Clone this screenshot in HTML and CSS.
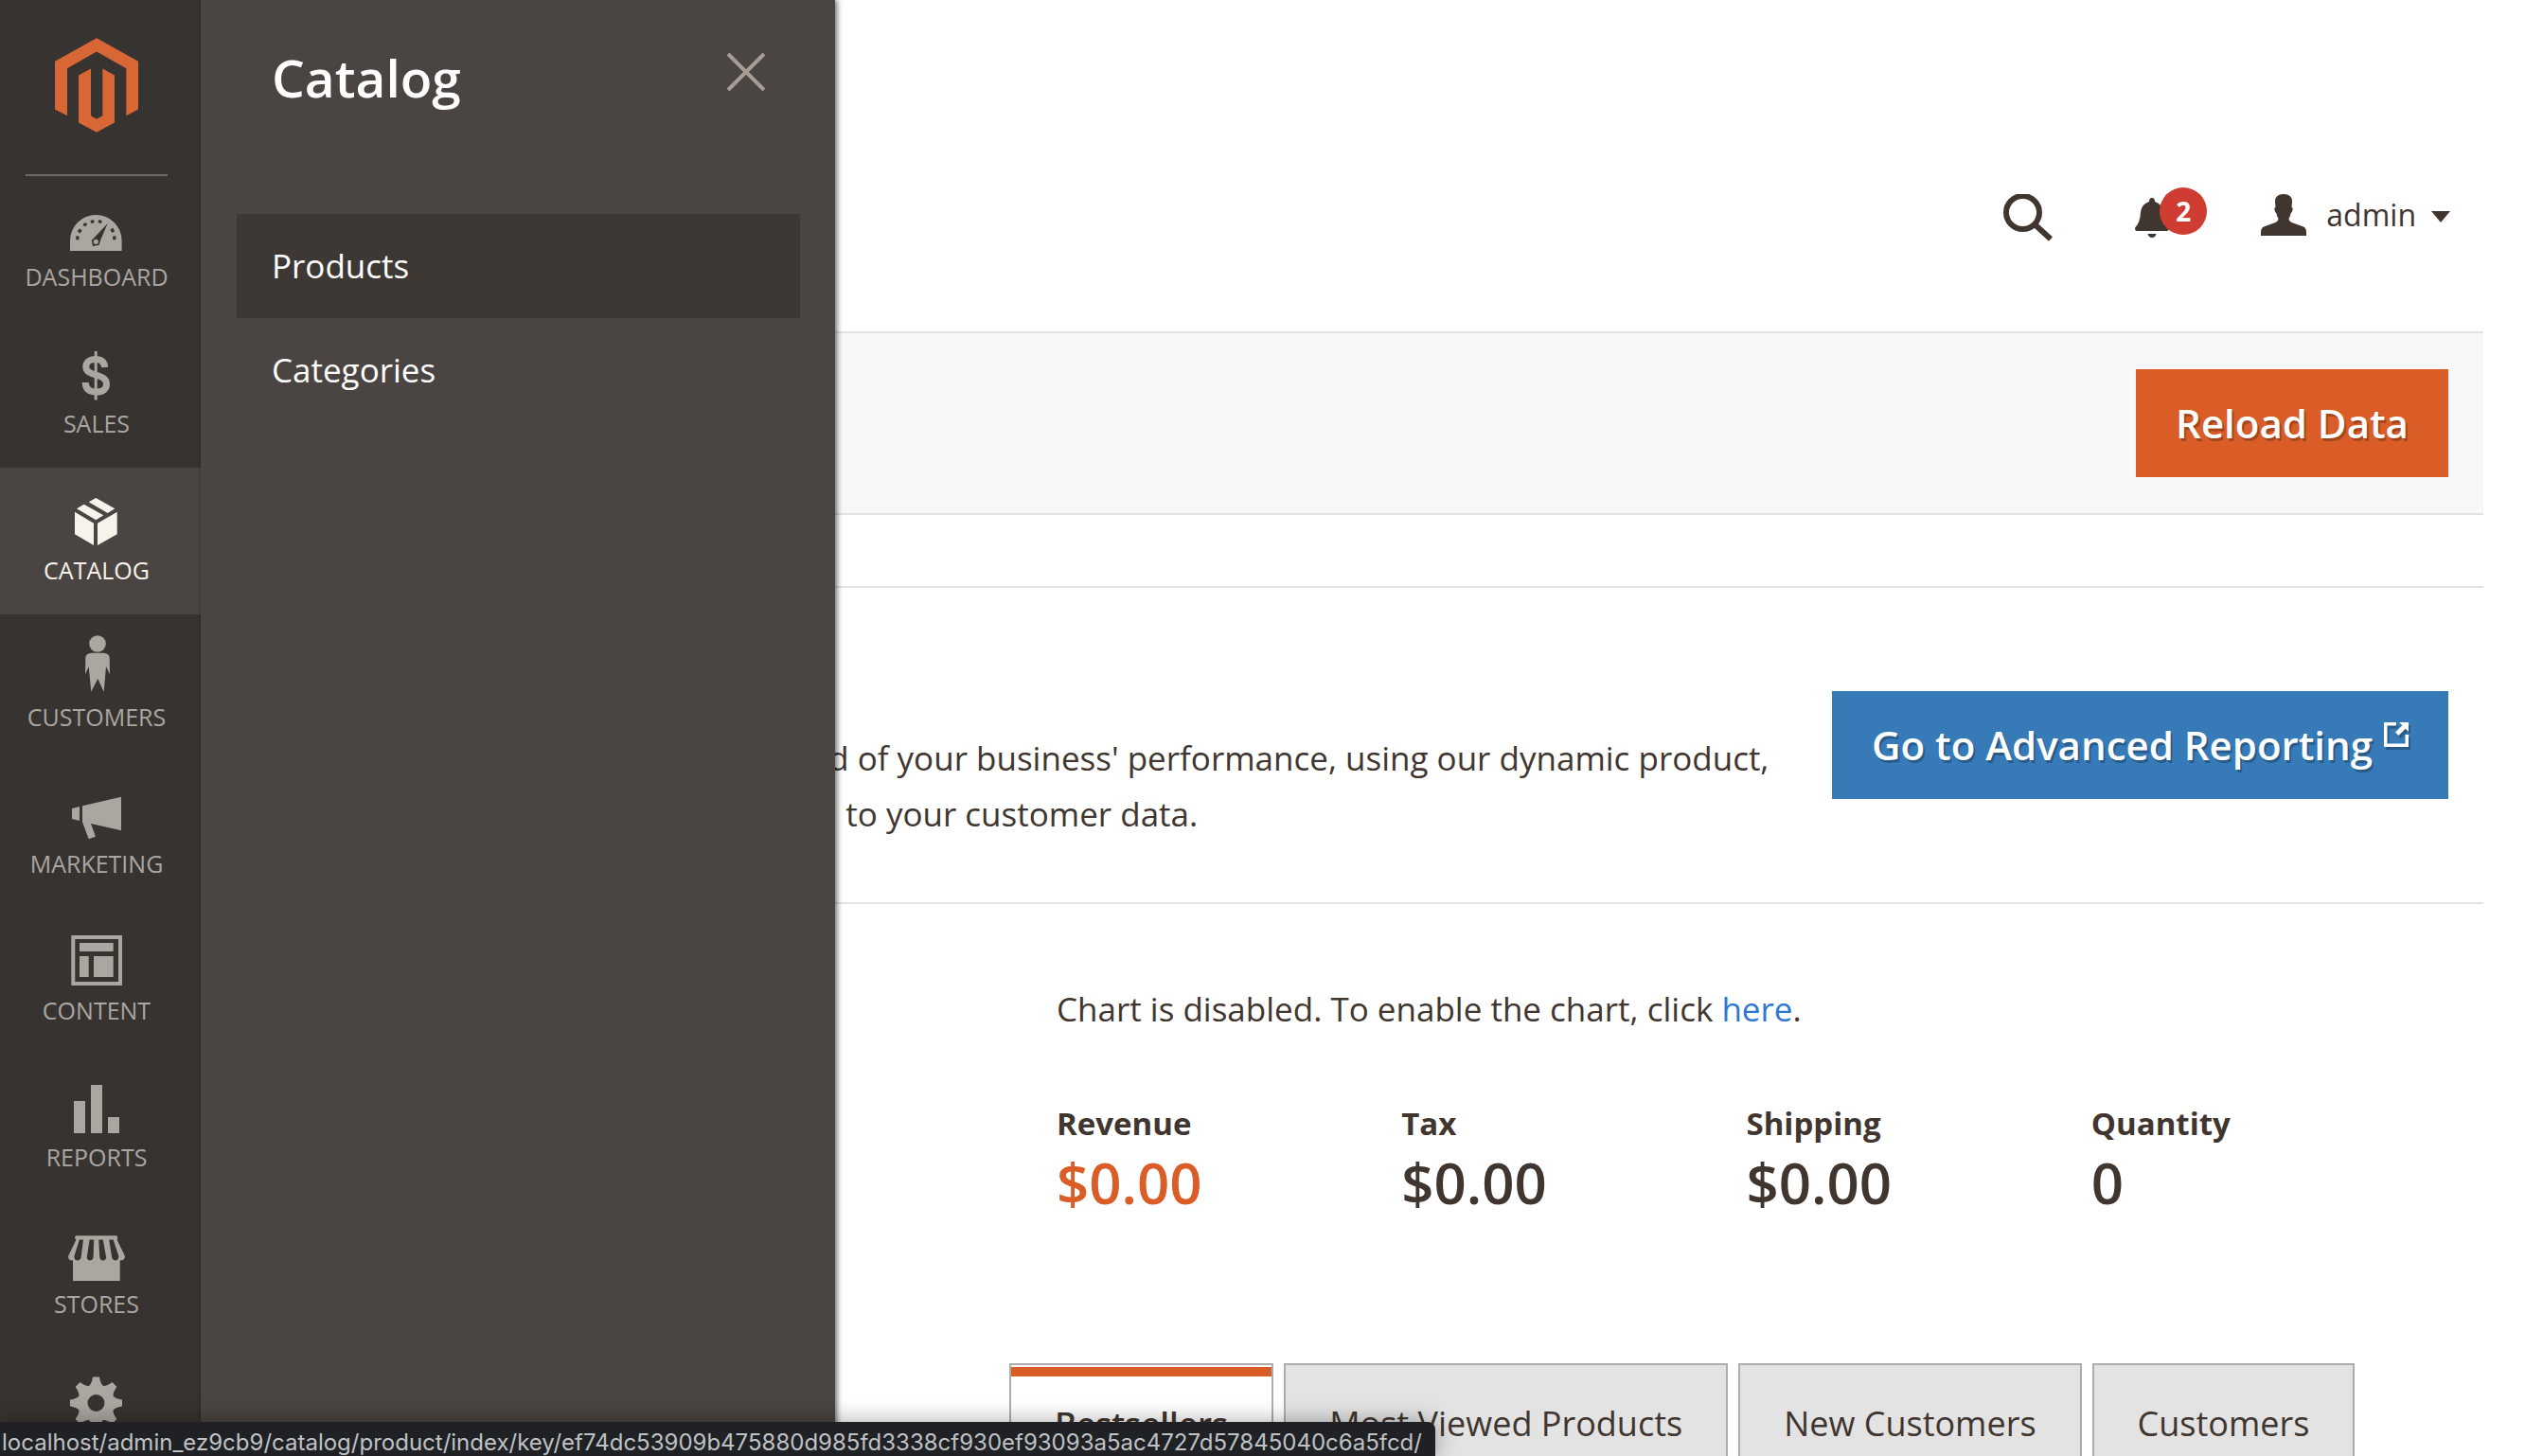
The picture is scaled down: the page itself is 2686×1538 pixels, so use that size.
FILE: index.html
```html
<!DOCTYPE html>
<html lang="en">
<head>
<meta charset="utf-8">
<meta name="viewport" content="width=device-width, initial-scale=1">
<title>Dashboard / Magento Admin</title>
<link rel="stylesheet" href="styles.css">
</head>
<body>
<div class="app">
  <aside class="sidebar">
    <a class="logo" href="#" aria-label="Magento Admin Panel">
      <svg viewBox="174 120 264 299" width="88" height="100" aria-hidden="true">
        <path d="M306 120 438 194V346L400 366V216L306 163 213 216V366L174 346V194Z"/>
        <path d="M249 238 288 217V366L306 377 325 366V217L363 238V388L306 419 249 388Z"/>
      </svg>
    </a>
    <nav class="menu" aria-label="Main">
      <a class="menu-item" href="#">
        <svg class="menu-icon" viewBox="0 0 60 64" aria-hidden="true">
          <path fill-rule="evenodd" d="M2 59V48A27.3 27 0 0 1 56.6 48V59ZM41.7 30 24.7 48 26 54 32.7 52.7 34.3 47.3Z"/>
          <circle cx="29.3" cy="49.3" r="2.6"/>
          <g class="cut">
            <path d="M8.4 43.2l3.2.4-.3 3.8-3.2-.3zM11.6 35.4l3 1.8-1.8 3.2-3-1.8zM17 29.2l3.3 1-1.6 3-3.2-1zM23.6 26.8l3.6-.6.4 3-3.6.8zM32 26.2l3.6.6-.4 3.2-3.6-.8zM44.4 36.6l2.8-1.8 2 3.4-2.8 1.8zM47 43.6l3.2-.4.4 3.8-3.2.4z"/>
          </g>
        </svg>
        <span>DASHBOARD</span>
      </a>
      <a class="menu-item" href="#">
        <svg class="menu-icon" viewBox="0 0 60 64" aria-hidden="true">
          <path class="line" stroke-width="7" d="M38.7 27C38.2 21 34.6 18.5 28.8 18.5C22.5 18.5 18.8 21.7 18.8 26.2C18.8 31.5 23 33.2 29 35C36 37 40.5 39 40.5 45C40.5 50.4 36 53 29.5 53C22 53 18.3 49.5 18.2 43"/>
          <path class="line" stroke-width="3" d="M29.2 10V61.5"/>
        </svg>
        <span>SALES</span>
      </a>
      <a class="menu-item active" href="#" aria-current="page">
        <svg class="menu-icon" viewBox="0 0 60 64" aria-hidden="true">
          <path d="M7 24.7 27 36.7V60L7 48.3ZM51.7 24.7 31 36.7V60L51.7 48.3ZM29.3 10 49.3 21.3 41.7 26 21.7 14.3ZM16.7 16.7 37.3 28.3 29.3 33.3 9 21.3Z"/>
        </svg>
        <span>CATALOG</span>
      </a>
      <a class="menu-item" href="#">
        <svg class="menu-icon" viewBox="0 0 60 64" aria-hidden="true">
          <circle cx="31" cy="9" r="8.8"/>
          <path d="M25 18.7H37Q43.5 19 43.7 24L44 41.3 40 33 37.7 59.7 31.3 46 24.3 59.7 21.7 33 18 41.3 18.3 24Q18.5 19 25 18.7Z"/>
        </svg>
        <span>CUSTOMERS</span>
      </a>
      <a class="menu-item" href="#">
        <svg class="menu-icon" viewBox="0 0 60 64" aria-hidden="true">
          <path d="M4 28 12 26V41L4 39ZM15 25.3 56 15.7V51.3L24 44 29 57.7 21.7 60.3 15 42.3Z"/>
        </svg>
        <span>MARKETING</span>
      </a>
      <a class="menu-item" href="#">
        <svg class="menu-icon" viewBox="0 0 60 64" aria-hidden="true">
          <path fill-rule="evenodd" d="M3.3 7H57V60H3.3ZM7.3 11V56H53V11Z"/>
          <path d="M12 15H47.7V24H12ZM12 29H21.7V51H12ZM27 29H47.7V51H27Z"/>
        </svg>
        <span>CONTENT</span>
      </a>
      <a class="menu-item" href="#">
        <svg class="menu-icon" viewBox="0 0 60 64" aria-hidden="true">
          <path d="M6 27H18V61H6ZM24 10H36V61H24ZM42 44H54V61H42Z"/>
        </svg>
        <span>REPORTS</span>
      </a>
      <a class="menu-item" href="#">
        <svg class="menu-icon" viewBox="0 0 60 64" aria-hidden="true">
          <path d="M8.5 14.3H51Q52.5 14.5 52.3 17L51.6 18.5 60 36Q60 40.5 54.7 40.5V62H5V40.5Q0 40.5 0 36L8.5 18.5 7 17Q7 14.5 8.5 14.3Z"/>
          <path class="cut" d="M11.8 18.4H16L13.6 37.5Q12.5 40.5 9.6 40.5 6.4 40 6.4 36ZM22.6 18.4H27.2L26.6 37.5Q25.5 40.5 23 40.5 20.2 40 19.7 37.5ZM32.2 18.4H36.8L40.2 37.5Q39.5 40.5 36.7 40.5 34 40.3 33.3 37.5ZM43.2 18.4H47.6L53.4 36Q53.3 40.2 50 40.5 47 40.3 46.2 37.5Z"/>
        </svg>
        <span>STORES</span>
      </a>
      <a class="menu-item" href="#" aria-label="System">
        <svg class="menu-icon" viewBox="0 0 60 64" aria-hidden="true">
          <defs><path id="tooth" d="M22 18Q25 15.500 26 8.500H33Q34 15.500 37 18V24H22Z"/></defs>
          <use href="#tooth"/>
          <use href="#tooth" transform="rotate(45 29.500 36)"/>
          <use href="#tooth" transform="rotate(90 29.500 36)"/>
          <use href="#tooth" transform="rotate(135 29.500 36)"/>
          <use href="#tooth" transform="rotate(180 29.500 36)"/>
          <use href="#tooth" transform="rotate(225 29.500 36)"/>
          <use href="#tooth" transform="rotate(270 29.500 36)"/>
          <use href="#tooth" transform="rotate(315 29.500 36)"/>
          <circle class="line" cx="29.500" cy="36" r="14" stroke-width="10"/>
        </svg>
      </a>
    </nav>
  </aside>

  <section class="submenu" aria-label="Catalog">
    <header class="submenu-head">
      <h2>Catalog</h2>
      <button class="close" type="button" aria-label="Close">
        <svg viewBox="0 0 42 42" width="42" height="42" aria-hidden="true"><path d="M2 2 40 40M40 2 2 40"/></svg>
      </button>
    </header>
    <ul>
      <li><a class="hover" href="#">Products</a></li>
      <li><a href="#">Categories</a></li>
    </ul>
  </section>

  <div class="page">
    <header class="header">
      <button class="icon-button search" type="button" aria-label="Search">
        <svg viewBox="0 0 52 50" width="52" height="50" aria-hidden="true"><circle cx="20.500" cy="19.500" r="17.500"/><path d="M32.500 31.500 50 47.500"/></svg>
      </button>
      <button class="icon-button bell" type="button" aria-label="Notifications">
        <svg viewBox="0 0 36 42" width="36" height="42" aria-hidden="true">
          <path d="M18 0Q21 0 21 4 29 6.500 30 15 30.500 26 35.500 31 37 34.500 34 35H2Q-1 34.500 .5 31 5.500 26 6 15 7 6.500 15 4 15 0 18 0ZM13.500 38H22.500Q21.500 42 18 42 14.500 42 13.500 38Z"/>
        </svg>
        <span class="badge">2</span>
      </button>
      <button class="icon-button account" type="button">
        <svg viewBox="0 0 48 44" width="48" height="44" aria-hidden="true">
          <path d="M24 0Q33 0 33 8L32.500 14Q34 14 33.500 17 33 20 31.500 20.500 31 24 29.500 25.500 29.500 29 34 30.500L45 34.500Q48 36 48 40V44H0V40Q0 36 3 34.500L14 30.500Q18.500 29 18.500 25.500 17 24 16.500 20.500 15 20 14.500 17 14 14 15.500 14L15 8Q15 0 24 0Z"/>
        </svg>
        <span class="account-name">admin</span>
        <svg class="caret" viewBox="0 0 20 12" width="20" height="12" aria-hidden="true"><path d="M0 0H20L10 12Z"/></svg>
      </button>
    </header>

    <main class="content">
      <div class="actions">
        <button class="button primary" type="button">Reload Data</button>
      </div>

      <section class="reporting">
        <p>Gain new insights and take command of your business' performance, using our dynamic product, order, and customer reports tailored to your customer data.</p>
        <a class="button secondary" href="#">Go to Advanced Reporting
          <svg viewBox="0 0 26 26" width="26" height="26" aria-hidden="true"><path d="M13 0V3.500H3.500V22.500H22.500V13H26V26H0V0ZM16 0H26V10L22.800 6.800 15.500 14 12 10.500 19.300 3.300Z"/></svg>
        </a>
      </section>

      <section class="dashboard">
        <p class="notice">Chart is disabled. To enable the chart, click <a href="#">here</a>.</p>
        <dl class="totals">
          <div><dt>Revenue</dt><dd class="highlight">$0.00</dd></div>
          <div><dt>Tax</dt><dd>$0.00</dd></div>
          <div><dt>Shipping</dt><dd>$0.00</dd></div>
          <div><dt>Quantity</dt><dd>0</dd></div>
        </dl>
        <nav class="tabs" aria-label="Reports">
          <a class="tab selected" href="#">Bestsellers</a>
          <a class="tab" href="#">Most Viewed Products</a>
          <a class="tab" href="#">New Customers</a>
          <a class="tab" href="#">Customers</a>
        </nav>
      </section>
    </main>
  </div>

  <div class="status">localhost/admin_ez9cb9/catalog/product/index/key/ef74dc53909b475880d985fd3338cf930ef93093a5ac4727d57845040c6a5fcd/</div>
</div>
</body>
</html>
```
FILE: styles.css
```css
:root {
  --ink: #41362f;
  --side: #373330;
  --panel: #4a4542;
  --rule: #e3e3e3;
  --orange: #da5c27;
  --blue: #367ab8;
}

* { box-sizing: border-box; }

body {
  margin: 0;
  background: #fff;
  color: var(--ink);
  font: 400 35px/48px "Open Sans", "Noto Sans", sans-serif;
}

a { color: inherit; text-decoration: none; }
button { font: inherit; color: inherit; border: 0; cursor: pointer; }
svg { display: block; flex: none; }
h2, p, ul, dl, dd { margin: 0; padding: 0; }
ul { list-style: none; }

.app {
  position: relative;
  display: flex;
  height: 100vh;
  overflow: hidden;
}

/* Sidebar */
.sidebar {
  flex: none;
  width: 212px;
  background: var(--side);
}

.logo {
  display: flex;
  justify-content: center;
  height: 186px;
  margin: 0 35px 0 27px;
  padding-top: 40px;
  border-bottom: 2px solid #736963;
  fill: #d96635;
}

.menu { margin-top: -2px; }

.menu-item {
  display: flex;
  flex-direction: column;
  align-items: center;
  gap: 8px;
  height: 155px;
  padding: 22px 8px 0 0;
  color: #aaa6a0;
  font-size: 25px;
  line-height: 28px;
}

.menu-item.active { background: var(--panel); color: #f7f3eb; }

.menu-icon { width: 60px; height: 64px; fill: currentColor; }
.menu-icon .cut { fill: var(--side); }
.menu-icon .line { fill: none; stroke: currentColor; }

/* Submenu flyout */
.submenu {
  position: absolute;
  z-index: 2;
  top: 0;
  bottom: 0;
  left: 212px;
  width: 670px;
  padding: 0 37px 0 38px;
  background: var(--panel);
  color: #fff;
  box-shadow: 2px 0 6px rgba(0, 0, 0, .6);
}

.submenu-head {
  display: flex;
  justify-content: space-between;
  height: 226px;
  padding: 46px 36px 0 37px;
}

.submenu-head h2 { font-size: 55px; font-weight: 600; line-height: 72px; }

.close { height: 42px; margin-top: 9px; padding: 0; background: none; }
.close path { stroke: #a79d95; stroke-width: 4; }

.submenu li a {
  display: block;
  padding: 31px 37px;
}

.submenu li .hover { background: #3e3835; }

/* Header */
.page { flex: 1; min-width: 0; padding-right: 63px; }

.header {
  display: flex;
  justify-content: flex-end;
  align-items: flex-start;
  height: 350px;
  padding: 205px 35px 0 0;
}

.icon-button {
  display: flex;
  align-items: center;
  padding: 0;
  background: none;
  fill: var(--ink);
}

.search circle, .search path { fill: none; stroke: var(--ink); stroke-width: 6; }
.bell { position: relative; margin: 4px 0 0 87px; }
.account { height: 44px; margin-left: 97px; font-size: 32px; }
.account-name { margin: 0 16px 0 21px; }
.caret { margin-top: 4px; }

.badge {
  position: absolute;
  top: -11px;
  left: 26px;
  width: 50px;
  border-radius: 50%;
  background: #cf3c32;
  color: #fff;
  font-size: 28px;
  font-weight: 700;
  line-height: 50px;
}

/* Buttons */
.button {
  display: flex;
  gap: 12px;
  flex: none;
  padding: 30px 42px;
  color: #fff;
  font-size: 42px;
  font-weight: 600;
  line-height: 54px;
  text-shadow: 2px 3px 0 rgba(0, 0, 0, .25);
}

.primary { background: var(--orange); }
.secondary { background: var(--blue); fill: #fff; }
.button svg { margin-top: 3px; filter: drop-shadow(2px 3px 0 rgba(0, 0, 0, .25)); }

/* Content */
.actions {
  display: flex;
  justify-content: flex-end;
  padding: 38px 37px;
  border: solid var(--rule);
  border-width: 2px 0;
  background: #f8f8f8;
}

.reporting {
  display: flex;
  justify-content: space-between;
  gap: 60px;
  height: 336px;
  margin-top: 75px;
  padding: 109px 37px 0 73px;
  border: solid var(--rule);
  border-width: 2px 0;
}

.reporting p { padding-top: 41px; line-height: 59px; }
.reporting .button { align-self: flex-start; }

.dashboard { padding: 87px 50px 0 854px; }

.notice { padding-left: 50px; }
.notice a { color: #2f78d2; }

.totals {
  display: grid;
  grid-template-columns: repeat(4, 1fr);
  margin: 73px 0 153px;
  padding-left: 50px;
}

.totals dt { font-size: 33px; font-weight: 700; }
.totals dd { font-size: 60px; font-weight: 600; line-height: 76px; }
.totals .highlight { color: var(--orange); }

.tabs { display: flex; gap: 11px; }

.tab {
  height: 120px;
  padding: 38px 46px;
  border: 2px solid #adadad;
  background: #e3e3e3;
  font-size: 36px;
  white-space: nowrap;
}

.selected {
  background: linear-gradient(var(--orange), var(--orange)) 0 2px / 100% 10px no-repeat #fff;
  font-size: 35px;
  font-weight: 600;
}

/* Link preview at the bottom of the window */
.status {
  position: absolute;
  z-index: 3;
  bottom: 0;
  left: 0;
  height: 36px;
  padding: 7px 14px 0 2px;
  border-top-right-radius: 8px;
  background: #202124;
  color: #bfc1c5;
  font: 24px/30px Inter, "Liberation Sans", sans-serif;
  box-shadow: 0 0 24px rgba(0, 0, 0, .35);
}
```
